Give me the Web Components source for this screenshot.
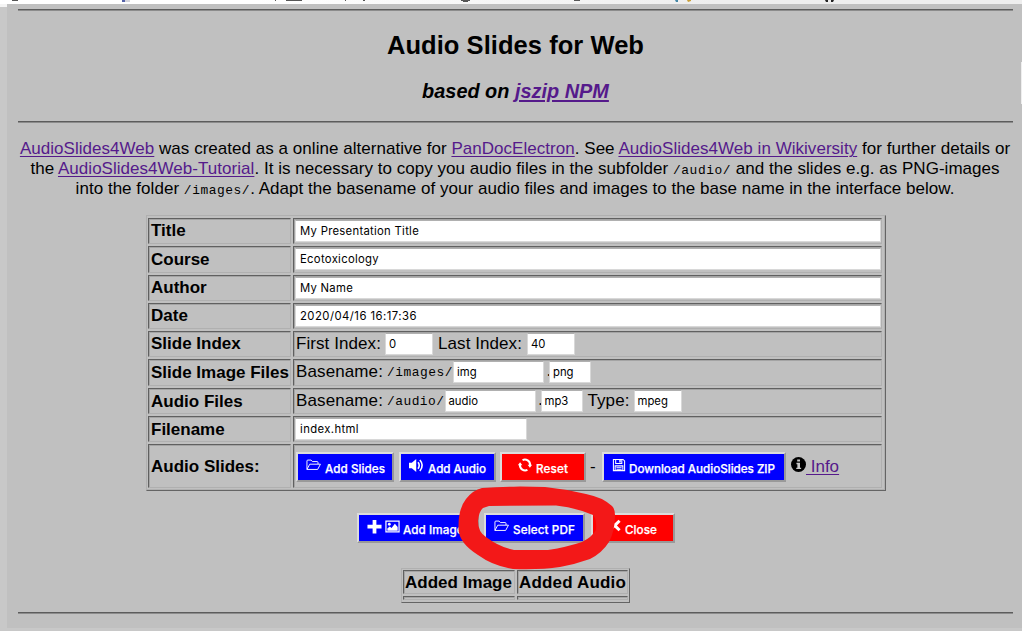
<!DOCTYPE html>
<html lang="en">
<head>
<meta charset="utf-8">
<title>Audio Slides for Web</title>
<style>
html,body{margin:0;height:100%;overflow:hidden;background:#c0c0c0}
body{font:17px/20px "Liberation Sans",Arial,sans-serif;color:#000}
</style>
</head>
<body>
<slides-app></slides-app>
<script>
const define = (name, css, html, extra) => customElements.define(name, class extends HTMLElement {
  constructor() {
    super();
    this.attachShadow({mode: 'open'}).innerHTML = '<style>' + css + '</style>' + (typeof html === 'function' ? html(this) : html);
  }
  connectedCallback() { if (extra) extra(this); }
});

const ICONS = {
  folder: '<path d="M1 12.2V3.2q0-1 1-1h3.4l1.4 1.6h5q1 0 1 1v1.6M1 12.2l3-5.6h11.4l-3 5.6z" fill="none" stroke="currentColor" stroke-width="1" stroke-linejoin="round"/>',
  volume: '<path d="M0 5h3l4.7-4v14L3 11H0z"/><path d="M9.6 4.6q2.6 3.4 0 6.8M11.6 2.2q5 5.8 0 11.6" fill="none" stroke="currentColor" stroke-width="1.7"/>',
  refresh: '<path d="M5.2 2.4A6 6 0 0 1 13.8 8M10.8 13.6A6 6 0 0 1 2.2 8" fill="none" stroke="currentColor" stroke-width="2.3"/><path d="M11 7.6h5.2l-2.6 3.6zM-.2 8.4H5L2.4 4.8z"/>',
  save: '<path d="M1.6 1.6h11l1.8 1.8v11H1.6zM4.2 1.6v4.6h7V1.6M3.6 14.4V9h8.8v5.4" fill="none" stroke="currentColor" stroke-width="1.2"/><path d="M8.3 2.2h1.7v3H8.3zM5 10.6h6v1H5zM5 12.5h6v.9H5z"/>',
  info: '<circle cx="8" cy="8" r="8"/><path d="M6.6 2.6h3v2.2h-3zM5.8 6.2h3.8v5.2h1.2v1.5H5.6v-1.5h1.2V7.7h-1z" fill="#c8c8c8"/>',
  plus: '<path d="M6 1h4v5h5.5v4H10v5.500H6V10H.5V6H6z"/>',
  picture: '<path d="M1 2.2h14v11.6H1z" fill="none" stroke="currentColor" stroke-width="1.3"/><circle cx="4.600" cy="5.600" r="1.500"/><path d="M2.500 12.400V10L5 8l2 1.500L10.500 5l3 3.500v3.900z"/>',
  remove: '<path d="M3 1l5 4.500L13 1l2.500 2.500L11 8l4.500 4.500L13 15l-5-4.500L3 15 .5 12.500 5 8 .5 3.500z"/>'
};
define('ui-icon', ':host{display:block;flex:none;width:var(--s,15px);height:var(--s,15px)}svg{display:block;width:100%;height:100%;overflow:visible}',
  el => '<svg viewBox="0 0 16 16" fill="currentColor">' + ICONS[el.getAttribute('name')] + '</svg>');

/* Single line of text tracked to a given width */
define('fit-text', ':host{display:inline-block;white-space:pre;flex:none}span{display:inline-block}', '<span><slot></slot></span>', el => {
  const s = el.shadowRoot.querySelector('span'), w = +el.getAttribute('w');
  const n = el.textContent.length, nat = s.getBoundingClientRect().width;
  if (w && nat) s.style.letterSpacing = (w - nat) / n + 'px';
});

define('app-link', ':host{display:inline}a{color:#551a8b;text-decoration:underline;text-decoration-thickness:var(--t,1px);text-underline-offset:2px}', '<a><slot></slot></a>');

define('page-rule', ':host{display:block;height:2px;box-sizing:border-box;border-top:1px solid #5c5c5c;border-bottom:1px solid #8c8c8c;margin:0 9px 0 11px}', '');

define('text-box', `:host{display:flex;align-items:center;box-sizing:border-box;flex:none;height:22px;background:#fff;border:1px solid #d8d8d8;
 border-top-color:#b0b0b0;padding:0 0 0 4px;font:11.3px/16px Inter,sans-serif}`, '<slot></slot>');

define('push-button', `:host{display:flex;box-sizing:border-box;flex:none;height:30px;align-items:flex-start;color:#fff;background:#00f;
 border:2px solid;border-color:#dcdcdc #999 #999 #dcdcdc;font:500 11.7px/16px Inter,sans-serif;-webkit-text-stroke:.25px #fff}
 :host([danger]){background:#f00}.i{display:flex;gap:3px;padding-top:4px}.t{padding-top:6.500px}`,
 '<div class="i"><slot name="icon"></slot></div><div class="t"><slot></slot></div>');

define('table-cell', `:host{display:flex;box-sizing:border-box;margin-bottom:2px;border:1px solid;border-color:#606060 #b0b0b0 #b0b0b0 #606060;
 box-shadow:inset 1px 1px 0 #a4a4a4;padding-left:2px;min-width:0}
 :host([head]){font-weight:bold;align-items:center}`, '<slot></slot>');

define('form-table', `:host{display:grid;box-sizing:border-box;width:740px;height:276px;margin-left:139px;padding:2px 0 0 1px;
 border:1px solid;border-color:#b0b0b0 #646464 #646464 #b0b0b0;box-shadow:inset -1px -1px 0 #b0b0b0;
 grid-template-columns:144px 589px;column-gap:1px;grid-template-rows:28px 29px 28px 28px 28px 29px 28px 28px 46px}
 table-cell[head]{margin-right:1px}
 table-cell:not([head]){align-items:flex-start;padding-top:1px;padding-left:1px}
 .w{width:586px}.lab{margin:.5px 0 0 1px}.code{font:12.9px/20px "Liberation Mono",monospace;margin-top:2px}
 .dot{width:8px;margin-right:-1px;padding-left:1px;box-sizing:border-box}
 .btns{box-sizing:border-box;padding-top:7px!important}
 push-button{color:#fff}`, `
 <table-cell head>Title</table-cell><table-cell><text-box class="w"><fit-text w="119">My Presentation Title</fit-text></text-box></table-cell>
 <table-cell head>Course</table-cell><table-cell><text-box class="w"><fit-text w="79">Ecotoxicology</fit-text></text-box></table-cell>
 <table-cell head>Author</table-cell><table-cell><text-box class="w"><fit-text w="53">My Name</fit-text></text-box></table-cell>
 <table-cell head>Date</table-cell><table-cell><text-box class="w"><fit-text w="117">2020/04/16 16:17:36</fit-text></text-box></table-cell>
 <table-cell head>Slide Index</table-cell><table-cell><fit-text class="lab" w="85">First Index:</fit-text><text-box style="width:48px;margin-left:4px;padding-left:3px">0</text-box><fit-text class="lab" w="84" style="margin-left:5px">Last Index:</fit-text><text-box style="width:48px;margin-left:5px;padding-left:3px">40</text-box></table-cell>
 <table-cell head>Slide Image Files</table-cell><table-cell><fit-text class="lab" w="87">Basename:</fit-text><fit-text class="code" w="66" style="margin-left:4px">/images/</fit-text><text-box style="width:91px;padding-left:3px">img</text-box><span class="code dot">.</span><text-box style="width:42px;margin-left:-2px;padding-left:3px">png</text-box></table-cell>
 <table-cell head style="padding-top:1px">Audio Files</table-cell><table-cell><fit-text class="lab" w="87">Basename:</fit-text><fit-text class="code" w="57.500" style="margin-left:4px">/audio/</fit-text><text-box style="width:91px;padding-left:3px">audio</text-box><span class="code dot">.</span><text-box style="width:42px;margin-left:-2px;padding-left:3px">mp3</text-box><fit-text class="lab" w="42" style="margin-left:5px">Type:</fit-text><text-box style="width:48px;margin-left:4px;padding-left:3px">mpeg</text-box></table-cell>
 <table-cell head style="padding-top:1px">Filename</table-cell><table-cell><text-box style="width:232px"><fit-text w="59">index.html</fit-text></text-box></table-cell>
 <table-cell head style="padding-top:2px">Audio Slides:</table-cell><table-cell class="btns" style="padding-left:2px">
  <push-button style="width:98px;padding-left:8px"><ui-icon slot="icon" name="folder"></ui-icon><fit-text w="60" style="margin-left:4px">Add Slides</fit-text></push-button>
  <push-button style="width:97px;margin-left:5px;padding-left:8px"><ui-icon slot="icon" name="volume"></ui-icon><fit-text w="58" style="margin-left:4px">Add Audio</fit-text></push-button>
  <push-button danger style="width:86px;margin-left:4px;padding-left:16px"><ui-icon slot="icon" name="refresh" style="--s:14px"></ui-icon><fit-text w="32" style="margin-left:4px">Reset</fit-text></push-button>
  <span style="margin:5px 0 0 4px;width:12px">-</span>
  <push-button style="width:184px;padding-left:8px"><ui-icon slot="icon" name="save" style="--s:14px"></ui-icon><fit-text w="146" style="margin-left:3px">Download AudioSlides ZIP</fit-text></push-button>
  <ui-icon name="info" style="margin:5px 0 0 5px"></ui-icon><app-link style="margin-top:5px;white-space:pre"> Info</app-link>
 </table-cell>`);

define('media-table', `:host{display:grid;box-sizing:border-box;width:229px;height:35px;margin-left:394px;padding:1px 0 0 1px;border:1px solid;
 border-color:#b0b0b0 #646464 #646464 #b0b0b0;grid-template-columns:112px 111px;column-gap:2px;grid-template-rows:26px 6px}
 table-cell{padding-left:1px}fit-text{margin-top:2px}`,
 '<table-cell head><fit-text w="107">Added Image</fit-text></table-cell><table-cell head><fit-text w="107">Added Audio</fit-text></table-cell><table-cell></table-cell><table-cell></table-cell>');

define('red-marker', ':host{position:absolute;left:0;top:0;width:1022px;height:631px;pointer-events:none}svg{display:block}',
 `<svg width="1022" height="631" viewBox="0 0 1022 631"><path fill="#f31818" fill-rule="evenodd" d="M482 488Q500 487 520 486.500L545 487Q565 489 586 494Q602 497 612 506Q615 509 615 515Q615 531 609 542Q602 553 590 559Q576 564 560 567Q540 570 513 569Q493 566 478 555Q459 543 458.500 529Q458 509 466 499Q473 490 482 488Z
 M489 506L556 505.500Q577 508 593 515Q597 519 596 530Q592 537 582 542Q567 547 548 550L514 550Q499 547 486 537Q478 532 478 521Q479 511 483 508Z"/></svg>`);

define('slides-app', `:host{display:block;position:relative;width:1022px;height:631px;background:#c0c0c0;overflow:hidden}
 .top{height:4px;background:linear-gradient(90deg,#fff 25%,#eee 70%)}.top svg{display:block}
 .body{height:624px;margin-left:7px;display:flex;flex-direction:column}
 .body>*{flex:none}
 .left{position:absolute;left:0;top:7px;width:7px;bottom:0;background:#c8c8c8}
 .lt{position:absolute;left:0;top:4px;width:7px;height:3px;background:#f4f4f4}
 .foot{position:absolute;left:0;right:0;bottom:0;height:3px;background:#c8c8c8}
 .edge{position:absolute;right:0;top:62px;width:1px;height:42px;background:#eee}
 h2{font-size:25.500px;line-height:30px;margin:19px 0 0;text-align:center;padding-left:2px}
 h3{font-size:19.900px;line-height:24px;margin:19px 0 0;text-align:center;font-style:italic;padding-left:2px}
 h3 app-link{--t:2px}
 .intro{height:60px;margin-top:16px;text-align:center;padding-left:2px;letter-spacing:.033px}
 .intro div{height:20px;white-space:nowrap;margin-left:-1px}
 code{font:12.900px/18px "Liberation Mono",monospace;letter-spacing:.55px}
 .actions{display:flex;margin:22px 0 0 350px;height:30px}`, `
 <div class="top"><svg width="1022" height="4"><path d="M12 0h6v1h-6zM275 0h1v1h-1zM286 0h16v1h-16zM345 0h1v1h-1zM363 0h2v1h-2zM461 0h9v1h-2v1h-5V1h-2zM574 0h6v1h-6z" fill="#555"/><path d="M122 0h3v2h-3z" fill="#5562a8"/><path d="M125 0h5v2h-5z" fill="#d4d4dc"/><path d="M675 0h3v2h-2z" fill="#4486a5"/><path d="M687 0h4v1l-3 1z" fill="#c99f37"/><path d="M825 0h3v2h-2zM831 0h3l-1 2h-2z" fill="#222"/></svg></div>
 <div class="body">
  <page-rule style="margin-top:5px"></page-rule>
  <h2><fit-text w="257">Audio Slides for Web</fit-text></h2>
  <h3>based on <app-link>jszip NPM</app-link></h3>
  <page-rule style="margin-top:18px"></page-rule>
  <div class="intro">
   <div><app-link>AudioSlides4Web</app-link> was created as a online alternative for <app-link>PanDocElectron</app-link>. See <app-link>AudioSlides4Web in Wikiversity</app-link> for further details or</div>
   <div>the <app-link>AudioSlides4Web-Tutorial</app-link>. It is necessary to copy you audio files in the subfolder <code>/audio/</code> and the slides e.g. as PNG-images</div>
   <div>into the folder <code>/images/</code>. Adapt the basename of your audio files and images to the base name in the interface below.</div>
  </div>
  <form-table style="margin-top:16px"></form-table>
  <div class="actions">
   <push-button style="width:122px;padding-left:8px"><ui-icon slot="icon" name="plus"></ui-icon><ui-icon slot="icon" name="picture"></ui-icon><fit-text w="67" style="margin-left:3px">Add Images</fit-text></push-button>
   <push-button style="width:101px;margin-left:5px;padding-left:8px"><ui-icon slot="icon" name="folder"></ui-icon><fit-text w="62" style="margin-left:4px">Select PDF</fit-text></push-button>
   <push-button danger style="width:84px;margin-left:6px;padding-left:15px"><ui-icon slot="icon" name="remove" style="--s:13px"></ui-icon><fit-text w="32" style="margin-left:4px">Close</fit-text></push-button>
  </div>
  <media-table style="margin-top:25px"></media-table>
  <page-rule style="margin-top:9px"></page-rule>
 </div>
 <div class="left"></div><div class="lt"></div><div class="foot"></div><div class="edge"></div>
 <red-marker></red-marker>`);
</script>
</body>
</html>
